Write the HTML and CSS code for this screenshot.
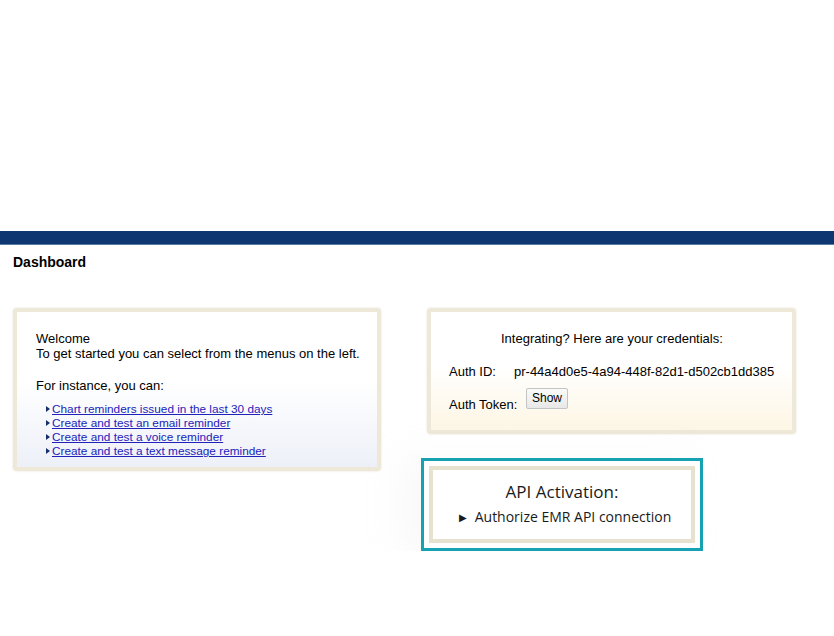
FILE: index.html
```html
<!DOCTYPE html>
<html>
<head>
<meta charset="utf-8">
<link rel="stylesheet" href="styles.css">
</head>
<body>
<div class="top-space"></div>
<div class="navbar"></div>
<h1 class="page-title">Dashboard</h1>
<div class="content">
  <div class="card welcome">
    <p class="line">Welcome</p>
    <p class="line">To get started you can select from the menus on the left.</p>
    <p class="line gap">For instance, you can:</p>
    <ul class="links">
      <li><a href="#">Chart reminders issued in the last 30 days</a></li>
      <li><a href="#">Create and test an email reminder</a></li>
      <li><a href="#">Create and test a voice reminder</a></li>
      <li><a href="#">Create and test a text message reminder</a></li>
    </ul>
  </div>
  <div class="right-col">
    <div class="card creds">
      <p class="creds-title">Integrating? Here are your credentials:</p>
      <div class="cred-row"><span class="cred-label">Auth ID:</span><span class="cred-value">pr-44a4d0e5-4a94-448f-82d1-d502cb1dd385</span></div>
      <div class="cred-row token"><span class="cred-label">Auth Token:</span><button class="show-btn">Show</button></div>
    </div>
    <div class="api-outer">
      <div class="api-inner">
        <div class="api-title">API Activation:</div>
        <div class="api-item"><span class="api-tri">&#9654;</span>Authorize EMR API connection</div>
      </div>
    </div>
  </div>
</div>
</body>
</html>
```
FILE: styles.css
```css
html, body {
  margin: 0;
  padding: 0;
  background: #ffffff;
  font-family: "Liberation Sans", Arial, sans-serif;
  color: #000;
}
.top-space {
  height: 231px;
}
.navbar {
  height: 13px;
  background: #0e3670;
  border-bottom: 1px solid #5a7aa6;
}
.page-title {
  margin: 0;
  padding: 9px 0 0 13px;
  height: 55px;
  box-sizing: border-box;
  font-size: 14px;
  font-weight: bold;
  line-height: 17px;
}
.content {
  display: flex;
  align-items: flex-start;
  padding: 8px 0 0 13px;
}
.card {
  border: 4px solid #ede8d8;
  border-radius: 4px;
  box-shadow: 0 0 2px rgba(200, 190, 160, 0.5);
  box-sizing: border-box;
}
.welcome {
  width: 368px;
  height: 163px;
  padding: 19px 0 0 19px;
  background: linear-gradient(to bottom, #ffffff 0%, #ffffff 45%, #edf0f8 100%);
  font-size: 13px;
}
.line {
  margin: 0;
  line-height: 15px;
}
.line.gap {
  margin-top: 17px;
}
.links {
  list-style: none;
  margin: 9px 0 0 0;
  padding: 0 0 0 10px;
  font-size: 11.8px;
}
.links li {
  line-height: 14px;
  position: relative;
  padding-left: 6px;
}
.links li::before {
  content: "";
  position: absolute;
  left: 0;
  top: 4px;
  border-left: 4px solid #1a2f6a;
  border-top: 3.5px solid transparent;
  border-bottom: 3.5px solid transparent;
}
.links a {
  color: #2222bb;
  text-decoration: underline;
}
.right-col {
  margin-left: 40px;
  display: flex;
  flex-direction: column;
}
.creds {
  margin-left: 6px;
  width: 369px;
  height: 126px;
  background: linear-gradient(to bottom, #ffffff 0%, #ffffff 45%, #fdf6e4 100%);
  font-size: 13px;
  padding: 19px 0 0 18px;
}
.creds-title {
  margin: 0 0 0 52px;
  line-height: 15px;
}
.cred-row {
  display: flex;
  align-items: center;
  margin-top: 18px;
  line-height: 15px;
}
.cred-label {
  width: 65px;
}
.token {
  margin-top: 9px;
  align-items: flex-end;
}
.token .cred-label {
  width: 77px;
  padding-bottom: 2px;
}
.show-btn {
  font-family: "Liberation Sans", Arial, sans-serif;
  font-size: 12px;
  padding: 2px 5px 3px;
  margin-bottom: 5px;
  border: 1px solid #c4c4c4;
  border-radius: 2px;
  background: linear-gradient(to bottom, #fafafa, #e8e8e8);
  color: #000;
  line-height: 14px;
}
.api-outer {
  margin-top: 24px;
  width: 282px;
  height: 93px;
  border: 3px solid #17a2b4;
  box-sizing: border-box;
  padding: 5px;
  box-shadow: -20px 0 30px rgba(230, 230, 230, 0.25);
}
.api-inner {
  height: 100%;
  box-sizing: border-box;
  border: 4px solid #e7e1d0;
  font-family: "Open Sans", "Liberation Sans", sans-serif;
  text-align: center;
  padding-top: 10px;
}
.api-title {
  font-size: 17px;
  line-height: 23px;
  color: #1a1a1a;
}
.api-item {
  margin-top: 5px;
  padding-left: 6px;
  font-size: 14px;
  line-height: 18px;
  color: #1a1a1a;
  display: flex;
  justify-content: center;
  align-items: center;
}
.api-tri {
  font-size: 10px;
  margin-right: 8px;
}
```
